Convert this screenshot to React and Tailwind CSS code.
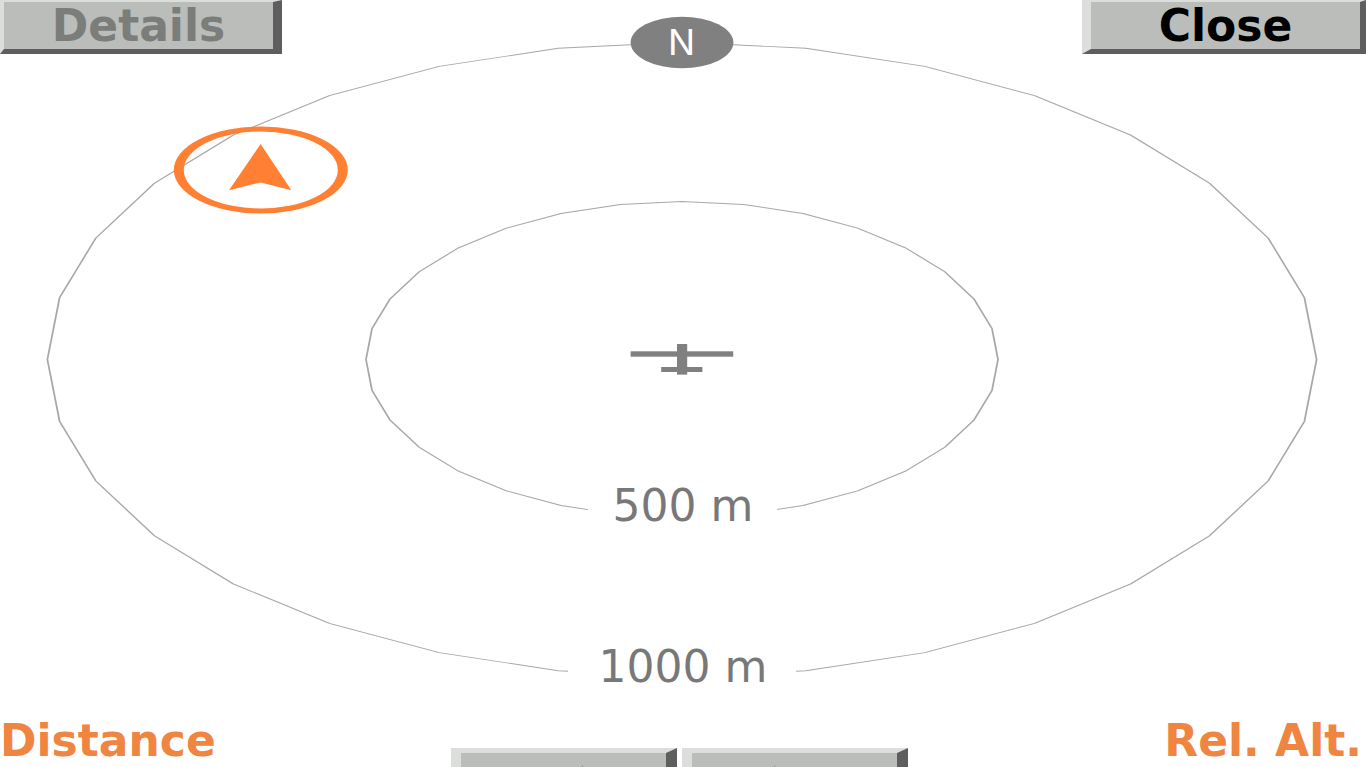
const ringPoints = (radius) =>
  Array.from({ length: 33 }, (_, i) => {
    const angle = (i * Math.PI) / 16;
    return `${(341 + radius * Math.sin(angle)).toFixed(1)},${(359.5 - radius * Math.cos(angle)).toFixed(1)}`;
  }).join(" ");

function Radar() {
  return (
    <svg
      className="absolute inset-0 h-full w-full"
      viewBox="0 0 683 767"
      preserveAspectRatio="none"
      aria-hidden="true"
    >
      <g fill="none" stroke="#a8a8a8" strokeWidth="0.9">
        <polyline points={ringPoints(317.3)} />
        <polyline points={ringPoints(158)} />
      </g>
      <rect x="294" y="490" width="94.5" height="36" fill="#fff" />
      <rect x="284" y="650" width="114" height="34" fill="#fff" />
      <circle cx="341" cy="42.5" r="25.7" fill="#808080" />
      <g fill="#808080">
        <rect x="315.3" y="351.3" width="51.3" height="5.4" />
        <rect x="338.5" y="344" width="5.1" height="30.6" />
        <rect x="330.6" y="367" width="20.6" height="5" />
      </g>
      <circle cx="130.4" cy="170" r="41" fill="none" stroke="#ff8033" strokeWidth="5" />
      <path d="M130.3 144 L145.7 190.2 L130.3 182.5 L114.5 190.2 Z" fill="#ff8033" />
    </svg>
  );
}

const bevel =
  "bg-[#bbbdba] border-solid border-t-[#dcdedb] border-l-[#dcdedb] border-r-[#5e5e5e] border-b-[#5e5e5e]";

function StepButton({ label, path }) {
  return (
    <button
      type="button"
      aria-label={label}
      className={`${bevel} flex h-14 w-full justify-center border-t-5 border-r-11 border-b-5 border-l-10 pt-3`}
    >
      <svg className="h-7 w-12" viewBox="0 0 48 28" fill="#5e5e5e" aria-hidden="true">
        <path d={path} />
      </svg>
    </button>
  );
}

export default function App() {
  return (
    <main className="relative flex h-screen w-full flex-col justify-between overflow-hidden bg-white font-['DejaVu_Sans','Roboto',sans-serif]">
      <Radar />
      <span className="absolute top-[42px] left-[49.9%] -translate-x-1/2 -translate-y-1/2 font-['Inter',sans-serif] text-4xl leading-none text-white">
        N
      </span>
      <span className="absolute top-[66%] left-1/2 -translate-x-1/2 -translate-y-1/2 text-[44px] leading-none whitespace-nowrap text-[#787878]">
        500 m
      </span>
      <span className="absolute top-[87%] left-1/2 -translate-x-1/2 -translate-y-1/2 text-[44px] leading-none whitespace-nowrap text-[#787878]">
        1000 m
      </span>

      <header className="relative flex justify-between text-[44px] leading-none font-bold">
        <button
          type="button"
          disabled
          className={`${bevel} h-[54px] w-[282px] border-t-2 border-r-9 border-b-5 border-l-4 text-[#7b7d7a]`}
        >
          Details
        </button>
        <button
          type="button"
          className={`${bevel} h-[54px] w-[284px] border-t-2 border-r-6 border-b-5 border-l-9 text-black`}
        >
          Close
        </button>
      </header>

      <footer className="relative grid h-12 grid-cols-[1fr_457px_1fr] items-start text-[44px] leading-none font-bold text-[#f08542]">
        <span>Distance</span>
        <div className="mt-[29px] -ml-1 mr-1 grid grid-cols-2 gap-[5px]">
          <StepButton label="Previous" path="M44 2 L44 26 L18 14 Z M44 1 L44 4 L40 4 Z" />
          <StepButton label="Next" path="M4 2 L4 26 L30 14 Z M4 1 L4 4 L8 4 Z" />
        </div>
        <span className="pr-1 text-right">Rel. Alt.</span>
      </footer>
    </main>
  );
}
